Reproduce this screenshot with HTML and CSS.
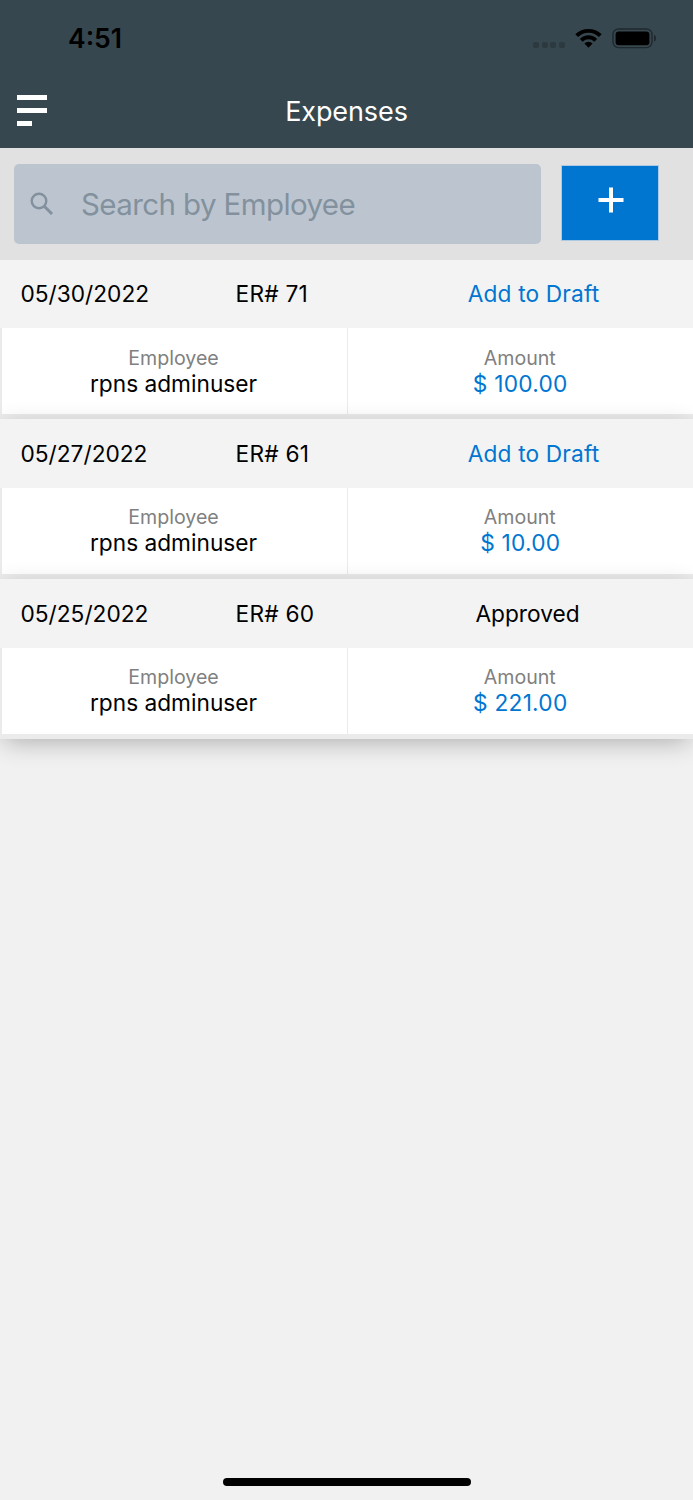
FILE: index.html
```html
<!DOCTYPE html>
<html lang="en">
<head>
    <meta charset="UTF-8">
    <meta name="viewport" content="width=device-width, initial-scale=1.0">
    <title>Expenses</title>
    <link rel="stylesheet" href="styles.css">
</head>
<body>
    <div class="screen">
        <header class="top">
            <div class="status-bar">
                <span class="time">4:51</span>
                <div class="status-icons">
                    <div class="dots"><i></i><i></i><i></i><i></i></div>
                    <svg class="wifi" viewBox="0 0 27 20" width="27" height="20">
                        <path d="M0.3 6.3 A18.8 18.8 0 0 1 26.7 6.3 L23.9 9.1 A14.8 14.8 0 0 0 3.1 9.1 Z"/>
                        <path d="M4.9 10.9 A12.2 12.2 0 0 1 22.1 10.9 L19.3 13.7 A8.2 8.2 0 0 0 7.7 13.7 Z"/>
                        <path d="M9.4 15.5 A5.8 5.8 0 0 1 17.6 15.5 L13.5 19.8 Z"/>
                    </svg>
                    <svg class="battery" viewBox="0 0 45 21" width="45" height="21">
                        <rect x="1" y="1" width="39" height="18.6" rx="5.5" fill="none" stroke="#1f292e" stroke-width="1.4"/>
                        <rect x="3.6" y="3.4" width="33.8" height="13.8" rx="3"/>
                        <path d="M42 6.8 C44.8 8 44.8 12.6 42 13.8 Z" fill="#1f292e"/>
                    </svg>
                </div>
            </div>
            <div class="nav-bar">
                <div class="menu-btn">
                    <span></span>
                    <span></span>
                    <span class="short"></span>
                </div>
                <h1>Expenses</h1>
            </div>
        </header>

        <div class="search-section">
            <div class="search-box">
                <svg viewBox="0 0 24 24" width="24" height="24" fill="none" stroke="#82919d" stroke-width="2.4">
                    <circle cx="9" cy="9" r="7.3"/>
                    <path d="M14 14 L22 22" stroke-width="3"/>
                </svg>
                <span>Search by Employee</span>
            </div>
            <button class="add-btn">
                <svg viewBox="0 0 26 26" width="26" height="26">
                    <path d="M13 0.5 V25.5 M0.5 13 H25.5" stroke="#fff" stroke-width="4"/>
                </svg>
            </button>
        </div>

        <div class="expense-list">
            <div class="card">
                <div class="card-head">
                    <span class="date">05/30/2022</span>
                    <span class="number">ER# 71</span>
                    <span class="status draft">Add to Draft</span>
                </div>
                <div class="card-body">
                    <div class="cell">
                        <label>Employee</label>
                        <p>rpns adminuser</p>
                    </div>
                    <div class="cell">
                        <label>Amount</label>
                        <p class="amount">$ 100.00</p>
                    </div>
                </div>
            </div>

            <div class="card">
                <div class="card-head">
                    <span class="date">05/27/2022</span>
                    <span class="number">ER# 61</span>
                    <span class="status draft">Add to Draft</span>
                </div>
                <div class="card-body">
                    <div class="cell">
                        <label>Employee</label>
                        <p>rpns adminuser</p>
                    </div>
                    <div class="cell">
                        <label>Amount</label>
                        <p class="amount">$ 10.00</p>
                    </div>
                </div>
            </div>

            <div class="card">
                <div class="card-head">
                    <span class="date">05/25/2022</span>
                    <span class="number">ER# 60</span>
                    <span class="status">Approved</span>
                </div>
                <div class="card-body">
                    <div class="cell">
                        <label>Employee</label>
                        <p>rpns adminuser</p>
                    </div>
                    <div class="cell">
                        <label>Amount</label>
                        <p class="amount">$ 221.00</p>
                    </div>
                </div>
            </div>
        </div>

        <div class="home-indicator"></div>
    </div>
</body>
</html>
```

FILE: styles.css
```css
* {
    margin: 0;
    padding: 0;
    box-sizing: border-box;
    font-family: 'Inter', sans-serif;
}

body {
    background: #f1f1f1;
}

.screen {
    width: 693px;
    height: 1500px;
    display: flex;
    flex-direction: column;
    overflow: hidden;
}

.top {
    height: 147.6px;
    background: #37474f;
}

.status-bar {
    height: 76px;
    padding: 0 36px 0 68px;
    display: flex;
    justify-content: space-between;
    align-items: center;
}

.time {
    font-size: 26.5px;
    font-weight: 600;
}

.status-icons {
    display: flex;
    align-items: center;
}

.dots {
    display: flex;
    gap: 2.6px;
    margin: 13px 10px 0 0;
}

.dots i {
    width: 6px;
    height: 6px;
    border-radius: 2px;
    background: #2c393f;
}

.wifi {
    margin-right: 10px;
}

.nav-bar {
    height: 69px;
    padding: 0 16px;
    display: grid;
    grid-template-columns: 1fr auto 1fr;
    align-items: center;
}

.nav-bar h1 {
    padding-top: 1px;
    color: white;
    font-size: 27px;
    font-weight: 400;
    letter-spacing: -0.1px;
}

.menu-btn {
    display: flex;
    flex-direction: column;
    gap: 8px;
    padding-left: 1px;
}

.menu-btn span {
    width: 30px;
    height: 5px;
    background: white;
}

.menu-btn .short {
    width: 15px;
}

.search-section {
    height: 112.2px;
    padding: 0 34px 0 13.5px;
    background: #e1e1e1;
    display: flex;
    justify-content: space-between;
    align-items: center;
    /* keeps the first card's shadow off the search area */
    position: relative;
    z-index: 1;
}

.search-box {
    width: 527.5px;
    height: 80px;
    padding-left: 16.5px;
    border-radius: 5px;
    background: #bcc5cf;
    color: #82919d;
    display: flex;
    align-items: center;
    gap: 27px;
    font-size: 29.5px;
    letter-spacing: -0.6px;
}

.add-btn {
    width: 98px;
    height: 76px;
    margin-bottom: 0.6px;
    padding: 0 0 6px 2px;
    border: 1px solid #aecae2;
    background: #0076d1;
    display: flex;
    justify-content: center;
    align-items: center;
}

.card {
    height: 159.7px;
    padding-bottom: 5px;
    background: #ebebeb;
    position: relative;
    box-shadow: 0 6px 24px -4px rgba(0,0,0,0.3);
}

.card-head {
    height: 68.5px;
    padding: 0 0 0.4px 20.5px;
    background: #f3f3f3;
    display: grid;
    grid-template-columns: 215px 182px 220px;
    align-items: center;
    font-size: 22.7px;
}

.number {
    letter-spacing: 0.25px;
}

.status {
    text-align: center;
}

.draft, .amount {
    color: #0076d1;
}

.draft {
    padding-left: 12px;
    letter-spacing: 0.15px;
}

.card-body {
    height: 86px;
    padding-left: 2px;
    display: grid;
    grid-template-columns: 344.5px 1fr;
    gap: 1.5px;
}

.cell {
    padding: 16.4px 1.5px 0 0;
    background: white;
    text-align: center;
}

.cell label {
    display: block;
    color: #808080;
    font-size: 19.6px;
    line-height: 26px;
}

.cell p {
    font-size: 22.7px;
    line-height: 26px;
}

.cell .amount {
    padding-left: 1px;
    letter-spacing: 0.25px;
}

.home-indicator {
    width: 248px;
    height: 8px;
    margin: auto 222.5px 14px;
    border-radius: 4px;
    background: black;
}
```
